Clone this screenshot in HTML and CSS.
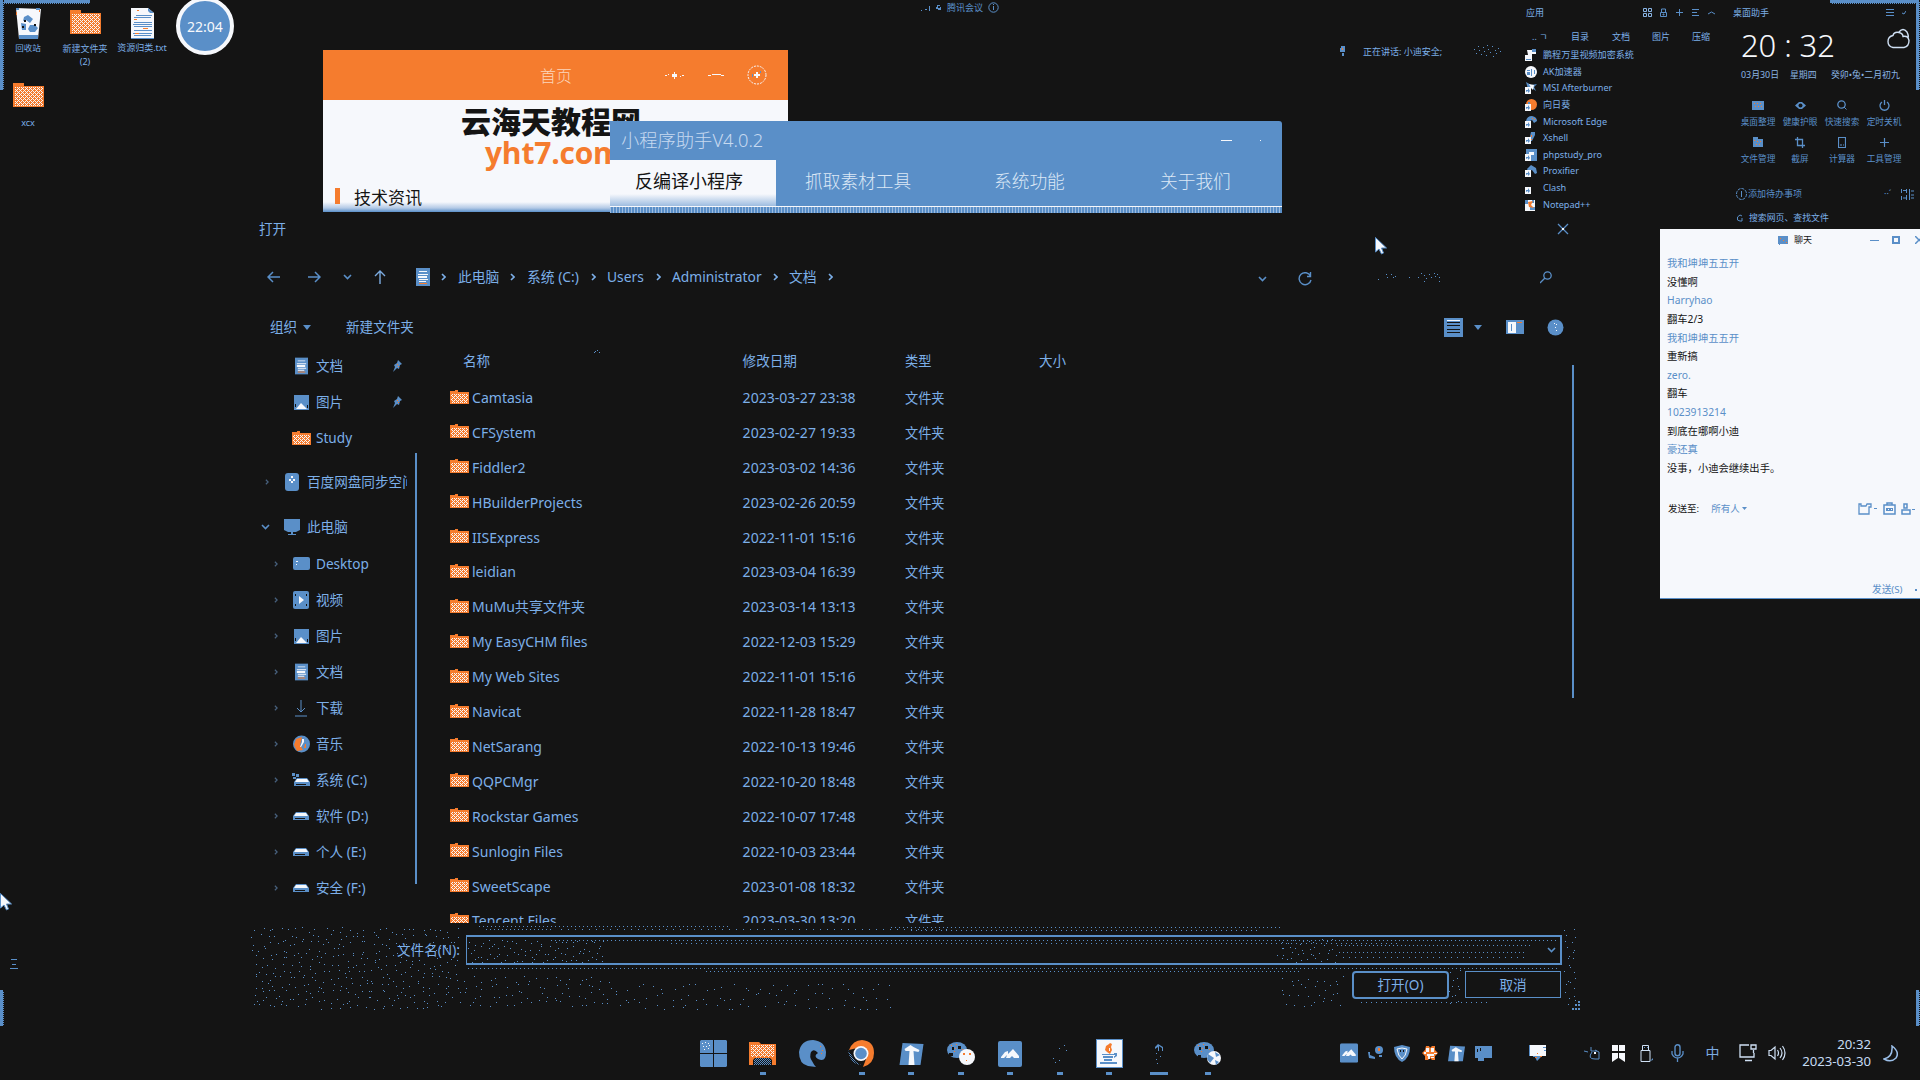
FILE: index.html
```html
<!DOCTYPE html>
<html lang="zh-CN">
<head>
<meta charset="utf-8">
<title>桌面</title>
<link rel="stylesheet" href="styles.css">
</head>
<body>
<svg class="defs" width="0" height="0">
  <defs>
    <pattern id="checker" width="2" height="2" patternUnits="userSpaceOnUse"><rect width="2" height="2" fill="#f57c2e"/><rect width="1" height="1" fill="#f6f8fc"/><rect x="1" y="1" width="1" height="1" fill="#f6f8fc"/></pattern>
    <pattern id="checker2" width="4" height="4" patternUnits="userSpaceOnUse"><rect width="4" height="4" fill="#f57c2e"/><path d="M0 0h1v1H0zM2 0h1v1H2zM1 1h1v1H1zM0 2h1v1H0zM2 2h1v1H2zM3 3h1v1H3z" fill="#f6f8fc"/></pattern>
    <pattern id="mesh" width="2" height="2" patternUnits="userSpaceOnUse"><rect width="1" height="1" fill="#5a8fc8"/><rect x="1" y="1" width="1" height="1" fill="#5a8fc8"/></pattern>
  </defs>
  <symbol id="folder" viewBox="0 0 19 15"><path d="M0 1h5V0h3v2h11v12H0z" fill="#f57c2e"/><path d="M1 4h17v9H1z" fill="url(#checker2)"/></symbol>
  <symbol id="bigfolder" viewBox="0 0 31 25"><path d="M0 0h11v3h20v21H0z" fill="#f57c2e"/><path d="M2 4h28v19H2z" fill="url(#checker2)"/></symbol>
  <symbol id="doc" viewBox="0 0 14 18"><path d="M0 0h14v18H0z" fill="#5a8fc8"/><path d="M3 3h8v1H3zM2 6h10v1H2zM2 8h9v2H2zM3 11h9v1H3zM3 13h7v1H3z" fill="#f6f8fc"/><path d="M3 15h8v1H3z" fill="#f57c2e"/></symbol>
  <symbol id="pic" viewBox="0 0 15 15"><path d="M0 0h15v15H0z" fill="#5a8fc8"/><path d="M2 14l5-6 2 2 4 4z" fill="#f6f8fc"/><path d="M1 9h1v3H1zM13 10h1v3h-1z" fill="#141414"/></symbol>
  <symbol id="drive" viewBox="0 0 16 9"><path d="M3 0h10l3 4v4H0V4z" fill="#5a8fc8"/><path d="M3 1h10l2 3H1z" fill="#f6f8fc"/><path d="M2 6h10v1H2z" fill="#141414"/></symbol>
  <symbol id="chev" viewBox="0 0 5 8"><path d="M1 1l3 3-3 3" fill="none" stroke="currentColor" stroke-width="1.600"/></symbol>
  <symbol id="down" viewBox="0 0 9 6"><path d="M1 1l3.500 3.500L8 1" fill="none" stroke="#5a8fc8" stroke-width="1.600"/></symbol>
  <symbol id="tri" viewBox="0 0 8 5"><path d="M0 0h8L4 5z" fill="#5a8fc8"/></symbol>
  <symbol id="pin" viewBox="0 0 10 12"><path d="M6 0l4 4-2 1-1 4-2-1-4 4 2-5-1-2 3-2z" fill="#5a8fc8"/><path d="M5 4h1v1H5zM6 6h1v1H6z" fill="#f57c2e"/></symbol>
  <symbol id="lnk" viewBox="0 0 12 12"><path d="M0 5h6v7H0z" fill="#f6f8fc"/><path d="M1 10V8h2V6l2 3-2 2V9z" fill="#5a8fc8"/></symbol>
  <symbol id="tee" viewBox="0 0 24 24"><path d="M3 1l21 1-3 21H0z" fill="#5a8fc8"/><path d="M5 7l6-4 3 2 6 3-1 2-5-1 1 14H9l1-14H6z" fill="#f6f8fc"/></symbol>
  <symbol id="wave" viewBox="0 0 24 26"><rect width="24" height="26" rx="2" fill="#5a8fc8"/><path d="M3 16l4-5 3-1v3l5-5 6 7v2h-5l-2-2-2 2H8l1-3-3 3H3z" fill="#f6f8fc"/></symbol>
  <symbol id="wechat" viewBox="0 0 28 26"><ellipse cx="10" cy="9" rx="10" ry="8" fill="#5a8fc8"/><path d="M5 6h2v3H5zM11 5h3v3h-3zM2 12h4v3H2z" fill="#141414"/><path d="M7 10h1v1H7zM9 3h1v1H9zM15 8h1v1h-1zM4 4h1v1H4zM8 7h1v1H8z" fill="#f57c2e"/><circle cx="20" cy="16" r="8" fill="#f6f8fc"/><path d="M16 12h2v2h-2zM22 12h2v2h-2zM19 19h1v1h-1z" fill="#f57c2e"/></symbol>
  <symbol id="wechat2" viewBox="0 0 28 26"><ellipse cx="10" cy="9" rx="10" ry="8" fill="#5a8fc8"/><path d="M5 6h2v3H5zM11 5h3v3h-3zM4 14h3v3H4z" fill="#141414"/><path d="M7 10h1v1H7zM9 3h1v1H9zM15 8h1v1h-1zM4 4h1v1H4zM8 7h1v1H8z" fill="#f57c2e"/><circle cx="20" cy="17" r="7" fill="#f6f8fc"/><path d="M14 13l6 4-4 5-3-4zM21 11l5 3-4 2zM21 19l4 2-3 3z" fill="#5a8fc8"/></symbol>
  <symbol id="cursor" viewBox="0 0 13 18"><path d="M.5.500V15l3.500-3 2.500 5 2-1-2-5h5z" fill="#f6f8fc" stroke="#5a8fc8"/></symbol>
</svg>

<main class="desktop">
  <div class="edge tl-h"></div><div class="edge tl-v"></div><div class="edge tr-h"></div><div class="edge tr-v"></div><div class="edge bl"></div><div class="edge br"></div>

  <figure class="shortcut recycle"><svg width="27" height="32" viewBox="0 0 27 32"><path d="M1 1l25 1-3 30H4z" fill="#f6f8fc"/><path d="M4 28h19v4H4zM1 1h3v2H1zM21 1h4v2h-4z" fill="#5a8fc8"/><path d="M9 10l4-2 5 4-3 4-4-3-3 1zM6 16l5 1v6H7zM15 18h5l3 3-3 4h-5l-2-3z" fill="#5a8fc8"/><path d="M9 13h2v2H9zM19 17h2v2h-2zM7 19h2v2H7z" fill="#141414"/><path d="M1 5h1v3H1zM24 3h1v2h-1z" fill="#f57c2e"/></svg><figcaption>回收站</figcaption></figure>
  <figure class="shortcut newfolder"><svg width="31" height="25"><use href="#bigfolder"/></svg><figcaption>新建文件夹<br>(2)</figcaption></figure>
  <figure class="shortcut txt"><svg width="23" height="31" viewBox="0 0 23 31"><path d="M0 0h17l6 5v26H0z" fill="#f6f8fc"/><path d="M17 0l6 5h-4l-2-2zM0 30h23v1H0zM5 7h16v1H5zM3 9h17v1H3zM3 14h18v1H3zM2 16h19v1H2zM3 18h18v1H3zM3 22h18v1H3zM2 25h19v1H2zM3 27h17v1H3z" fill="#5a8fc8"/><path d="M6 2h2v1H6zM3 11h3v1H3zM12 20h5v1h-5zM4 25h4v1H4z" fill="#f57c2e"/></svg><figcaption>资源归类.txt</figcaption></figure>
  <figure class="shortcut xcx"><svg width="31" height="25"><use href="#bigfolder"/></svg><figcaption>xcx</figcaption></figure>
  <div class="clockball">22:04</div>

  <div class="meeting"><svg width="10" height="9" viewBox="0 0 10 9"><path d="M0 7h1v1H0zM4 6h2v1H4zM8 3h1v5H8z" fill="#5a8fc8"/></svg><svg width="6" height="5" viewBox="0 0 6 5"><path d="M0 2h1V0h3v1H2v2h2V2h1v3H2V4H0z" fill="#5a8fc8"/></svg><span>腾讯会议</span><svg width="11" height="11" viewBox="0 0 11 11"><circle cx="5.500" cy="5.500" r="4.700" fill="none" stroke="#5a8fc8"/><path d="M5 2h1v1H5zM5 4h1v4H5z" fill="#5a8fc8"/></svg></div>
  <div class="speaking"><svg width="5" height="11" viewBox="0 0 5 11"><path d="M1 0h4v6H0V2h1zM2 7h2v3H2z" fill="#5a8fc8"/><path d="M2 2h1v2H2z" fill="#f57c2e"/></svg><span>正在讲话: 小迪安全;</span><svg width="29" height="13" viewBox="0 0 29 13"><path d="M1 4h1v1H1zM3 8h1v1H3zM5 1h1v1H5zM6 5h1v1H6zM8 9h1v1H8zM10 2h1v1h-1zM11 6h1v1h-1zM13 10h1v1h-1zM14 0h1v1h-1zM15 4h1v1h-1zM17 7h1v1h-1zM19 1h1v1h-1zM20 11h1v1h-1zM22 5h1v1h-1zM23 8h1v1h-1zM25 3h1v1h-1zM27 6h1v1h-1z" fill="#5a8fc8"/></svg></div>

  <section class="win site">
    <header><span>首页</span><svg width="20" height="8" viewBox="0 0 20 8"><path d="M0 4h2v1H0zM3 3h1v1H3zM7 3h5v3H7zM9 1h1v7H9zM15 5h1v1h-1zM17 4h2v1h-2z" fill="#f6f8fc"/></svg><svg width="16" height="4" viewBox="0 0 16 4"><path d="M0 2h3v1H0zM4 1h9v1H4zM13 2h3v1h-3z" fill="#f6f8fc"/></svg><svg width="20" height="20" viewBox="0 0 20 20"><circle cx="10" cy="10" r="9" fill="none" stroke="#f6f8fc" stroke-dasharray="2 1"/><path d="M7 9h6v2H7zM9 7h2v6H9z" fill="#f6f8fc"/><path d="M5 9h1v3H5zM13 6h1v2h-1z" fill="#5a8fc8"/></svg></header>
    <h1>云海天教程网</h1>
    <p class="domain">yht7.com</p>
    <p class="news"><i></i>技术资讯</p>
  </section>

  <section class="win helper">
    <header><span>小程序助手V4.0.2</span><i></i><b></b></header>
    <nav><span class="on">反编译小程序</span><span>抓取素材工具</span><span>系统功能</span><span>关于我们</span></nav>
    <div class="strip"></div>
  </section>

  <section class="apps">
    <header><span>应用</span><svg width="9" height="9" viewBox="0 0 9 9"><path d="M.5.500h3v3h-3zM5.500.500h3v3h-3zM.5 5.500h3v3h-3zM5.500 5.500h3v3h-3z" fill="none" stroke="#8ab4e4"/></svg><svg width="7" height="9" viewBox="0 0 7 9"><path d="M1.500 4V1h4v3M.5 4.500h6v4h-6zM3 6h1v1H3z" fill="none" stroke="#5a8fc8"/></svg><svg width="7" height="9" viewBox="0 0 7 9"><path d="M0 4h7v1H0zM3 1h1v7H3z" fill="#5a8fc8"/></svg><svg width="7" height="9" viewBox="0 0 7 9"><path d="M0 1h7v1H0zM0 4h5v1H0zM0 7h7v1H0z" fill="#5a8fc8"/></svg><svg width="7" height="9" viewBox="0 0 7 9"><path d="M0 6l3.500-2L7 6" fill="none" stroke="#5a8fc8"/></svg></header>
    <nav><span>‥ ㄱ</span><span>目录</span><span>文档</span><span>图片</span><span>压缩</span></nav>
    <ul>
      <li><svg width="12" height="13" viewBox="0 0 12 13"><path d="M2 1h5l4 1v3H7v7H0V6h3z" fill="#f6f8fc"/><path d="M7 0h4v3H7zM1 10h5v1H1z" fill="#5a8fc8"/></svg>鹏程万里视频加密系统</li>
      <li><svg width="12" height="12" viewBox="0 0 12 12"><circle cx="6" cy="6" r="6" fill="#f6f8fc"/><path d="M2 4h3v1H2zM6 3h1v7H6zM2 6h3v3H2zM9 4h1v4H9z" fill="#5a8fc8"/></svg>AK加速器</li>
      <li><svg width="12" height="12" viewBox="0 0 12 12"><path d="M1 0l5 3 6-1-3 3 2 4-4-3-4 1z" fill="#5a8fc8"/><path d="M4 2l5 1-1 5-2-2z" fill="#f6f8fc"/><use href="#lnk"/></svg>MSI Afterburner</li>
      <li><svg width="12" height="12" viewBox="0 0 12 12"><circle cx="6.500" cy="5.500" r="5.500" fill="#f57c2e"/><path d="M3 3h2v2H3z" fill="#5a8fc8"/><use href="#lnk"/></svg>向日葵</li>
      <li><svg width="12" height="12" viewBox="0 0 12 12"><path d="M1 5q1-5 6-5 5 1 5 5l-3 2-2-3-4 2z" fill="#5a8fc8"/><path d="M7 2h1v1H7zM9 3h1v1H9z" fill="#f57c2e"/><use href="#lnk"/></svg>Microsoft Edge</li>
      <li><svg width="12" height="12" viewBox="0 0 12 12"><path d="M6 0h4v3l-3 6H4z" fill="#5a8fc8"/><path d="M6 3h1v2H6zM5 7h2v1H5z" fill="#f57c2e"/><use href="#lnk"/></svg>Xshell</li>
      <li><svg width="12" height="12" viewBox="0 0 12 12"><path d="M1 0h11v12H1z" fill="#5a8fc8"/><path d="M4 3h5v3H6V5H4z" fill="#f6f8fc"/><use href="#lnk"/></svg>phpstudy_pro</li>
      <li><svg width="12" height="12" viewBox="0 0 12 12"><path d="M2 4l4-4 5 3 1 5-2 1-3-4-4 1z" fill="#5a8fc8"/><use href="#lnk"/></svg>Proxifier</li>
      <li><svg width="12" height="12"><use href="#lnk"/></svg>Clash</li>
      <li><svg width="12" height="12" viewBox="0 0 12 12"><path d="M2 1h8v11H0V2z" fill="#f6f8fc"/><path d="M0 1h3v4H0zM7 1h2v3H7zM5 8h5v3H5z" fill="#5a8fc8"/><path d="M3 3l5-1-2 4 3 3-5-1z" fill="#f57c2e"/></svg>Notepad++</li>
    </ul>
  </section>

  <section class="assist">
    <header><span>桌面助手</span><svg width="8" height="9" viewBox="0 0 8 9"><path d="M0 1h8v1H0zM0 4h8v1H0zM0 7h8v1H0z" fill="#5a8fc8"/></svg><svg width="4" height="5" viewBox="0 0 4 5"><path d="M0 3l2 1 2-3" fill="none" stroke="#5a8fc8"/></svg></header>
    <div class="time"><strong>20 : 32</strong><svg width="24" height="21" viewBox="0 0 24 21"><path d="M6 19.500q-5-1-5-6 0-5 5-6 1-4 6-3 4 1 4 4 5-1 6 4 0 6-5 7zM12 4q4-5 8 0 2 4 1 6" fill="none" stroke="#cfe0f4" stroke-width="1.400"/></svg></div>
    <div class="date"><span>03月30日</span><span>星期四</span><span>癸卯•兔•二月初九</span></div>
    <div class="tools">
      <span><svg width="12" height="9" viewBox="0 0 12 9"><path d="M0 0h12v9H0z" fill="#5a8fc8"/><path d="M2 2h1v1H2zM5 2h1v1H5zM8 2h1v1H8zM3 5h1v1H3zM6 5h1v1H6zM9 5h1v1H9z" fill="#f57c2e"/></svg>桌面整理</span>
      <span><svg width="11" height="9" viewBox="0 0 11 9"><path d="M0 4.500L4 1h3l4 3.500L7 8H4z" fill="#5a8fc8"/><circle cx="5.500" cy="4.500" r="2" fill="#141414"/></svg>健康护眼</span>
      <span><svg width="10" height="10" viewBox="0 0 10 10"><circle cx="4.500" cy="4.500" r="3.700" fill="none" stroke="#5a8fc8" stroke-width="1.300"/><path d="M7 7l2.500 2.500" stroke="#5a8fc8"/></svg>快速搜索</span>
      <span><svg width="11" height="11" viewBox="0 0 11 11"><path d="M3 2a4.500 4.500 0 105 0M5.500 0v5" fill="none" stroke="#5a8fc8" stroke-width="1.300"/></svg>定时关机</span>
      <span><svg width="10" height="10" viewBox="0 0 10 10"><path d="M0 0h5v2h5v8H0z" fill="#5a8fc8"/><path d="M1 3h1v1H1zM4 4h1v1H4zM7 4h1v1H7zM3 7h1v1H3zM6 7h1v1H6z" fill="#f57c2e"/></svg>文件管理</span>
      <span><svg width="10" height="11" viewBox="0 0 10 11"><path d="M2.500 0v8.500H10M0 2.500h7.500V11" fill="none" stroke="#5a8fc8" stroke-width="1.300"/></svg>截屏</span>
      <span><svg width="8" height="11" viewBox="0 0 8 11"><path d="M.5.500h7v10h-7zM2 8h2M5 8h1" fill="none" stroke="#5a8fc8" stroke-width="1.200"/></svg>计算器</span>
      <span><svg width="9" height="9" viewBox="0 0 9 9"><path d="M0 4.500h9M4.500 0v9" stroke="#5a8fc8" stroke-width="1.200"/></svg>工具管理</span>
    </div>
    <div class="todo"><svg width="11" height="12" viewBox="0 0 11 12"><ellipse cx="5.500" cy="6" rx="5" ry="5.500" fill="none" stroke="#5a8fc8" stroke-dasharray="3 1"/><path d="M5 3h1v6H5z" fill="#5a8fc8"/></svg><span>添加待办事项</span><i>··ˊ</i><svg width="13" height="11" viewBox="0 0 13 11"><path d="M.5 0v4M2 1.500h3M.5 7v4M2 9h3M5.500 0v4M5.500 6v5M8.500 0v11M10 2h3M10 6h3M10 9h3" stroke="#5a8fc8"/></svg></div>
    <div class="find"><svg width="6" height="8" viewBox="0 0 6 8"><path d="M5 2L3 1 .5 3v3L3 7h2V4" fill="none" stroke="#5a8fc8"/></svg><span>搜索网页、查找文件</span></div>
  </section>

  <section class="win chat">
    <header><svg width="10" height="9" viewBox="0 0 10 9"><path d="M0 0h10v8H2v1H1V8H0z" fill="#5a8fc8"/><path d="M2 2h1v1H2zM5 4h1v1H5zM8 6h1v1H8z" fill="#f57c2e"/></svg><span>聊天</span><svg width="9" height="3" viewBox="0 0 9 3"><path d="M0 1h9v1H0z" fill="#5a8fc8"/></svg><svg width="8" height="8" viewBox="0 0 8 8"><path d="M1 1h6v6H1z" fill="none" stroke="#5a8fc8" stroke-width="2"/></svg><svg width="5" height="8" viewBox="0 0 5 8"><path d="M0 0l5 5M0 8l5-5" stroke="#5a8fc8" stroke-width="1.500"/></svg></header>
    <dl><dt>我和坤坤五五开</dt><dd>没懂啊</dd><dt>Harryhao</dt><dd>翻车2/3</dd><dt>我和坤坤五五开</dt><dd>重新搞</dd><dt>zero.</dt><dd>翻车</dd><dt>1023913214</dt><dd>到底在哪啊小迪</dd><dt>豪还真</dt><dd>没事，小迪会继续出手。</dd></dl>
    <div class="sendto"><b>发送至:</b><span>所有人</span><svg width="5" height="4" viewBox="0 0 5 4"><path d="M0 0h5L2.500 3z" fill="#5a8fc8"/></svg><svg class="push" width="20" height="12" viewBox="0 0 20 12"><path d="M3 3v-2H1v10h10V4h2V1H9L8 3z" fill="none" stroke="#5a8fc8" stroke-width="1.300"/><path d="M16 5h3v1h-3z" fill="#5a8fc8"/></svg><svg width="13" height="13" viewBox="0 0 13 13"><path d="M1 3h11v9H1zM4 3V1h5v2" fill="none" stroke="#5a8fc8" stroke-width="1.500"/><path d="M3 6h7v3H3z" fill="#5a8fc8"/><path d="M5 7h1v1H5zM8 7h1v1H8z" fill="#f6f8fc"/></svg><svg width="14" height="12" viewBox="0 0 14 12"><path d="M3 1h3v4H3zM1 7h8v4H1z" fill="none" stroke="#5a8fc8" stroke-width="1.500"/><path d="M11 6h3v1h-3z" fill="#5a8fc8"/></svg></div>
    <footer>发送(S)<i></i></footer>
  </section>

  <section class="win dialog">
    <header><span>打开</span><svg width="12" height="12" viewBox="0 0 12 12"><path d="M1 1l10 10M11 1L1 11" stroke="#5a8fc8" stroke-width="1.300"/><path d="M5 5h2v2H5z" fill="#f6f8fc"/></svg></header>
    <nav class="path">
      <svg width="14" height="12" viewBox="0 0 14 12"><path d="M13 6H1M6 1L1 6l5 5" fill="none" stroke="#5a8fc8" stroke-width="1.500"/></svg>
      <svg width="14" height="12" viewBox="0 0 14 12"><path d="M1 6h12M8 1l5 5-5 5" fill="none" stroke="#5a8fc8" stroke-width="1.500"/></svg>
      <svg width="9" height="6"><use href="#down"/></svg>
      <svg width="12" height="14" viewBox="0 0 12 14"><path d="M6 14V1M1 6l5-5 5 5" fill="none" stroke="#7cabe0" stroke-width="1.400"/></svg>
      <svg width="14" height="18"><use href="#doc"/></svg>
      <svg width="5" height="8"><use href="#chev"/></svg><span>此电脑</span>
      <svg width="5" height="8"><use href="#chev"/></svg><span>系统 (C:)</span>
      <svg width="5" height="8"><use href="#chev"/></svg><span>Users</span>
      <svg width="5" height="8"><use href="#chev"/></svg><span>Administrator</span>
      <svg width="5" height="8"><use href="#chev"/></svg><span>文档</span>
      <svg width="5" height="8"><use href="#chev"/></svg>
      <svg class="low" width="9" height="6"><use href="#down"/></svg>
      <svg class="low" width="14" height="14" viewBox="0 0 14 14"><path d="M12.500 4A6 6 0 1013 8M12.500 0v4.500H9" fill="none" stroke="#5a8fc8" stroke-width="1.400"/></svg>
      <svg width="64" height="10" viewBox="0 0 64 10"><path d="M1 7h1v1H1zM9 2h1v1H9zM10 5h1v1h-1zM14 2h1v1h-1zM16 5h1v1h-1zM18 4h1v1h-1zM32 5h1v1h-1zM41 5h1v1h-1zM44 1h1v1h-1zM47 3h1v1h-1zM49 6h1v1h-1zM47 9h1v1h-1zM52 2h1v1h-1zM54 5h1v1h-1zM57 1h1v1h-1zM58 4h1v1h-1zM60 2h1v1h-1zM62 5h1v1h-1zM62 9h1v1h-1z" fill="#5a8fc8"/></svg>
      <svg width="12" height="13" viewBox="0 0 12 13"><circle cx="7.500" cy="4.500" r="3.700" fill="none" stroke="#5a8fc8" stroke-width="1.300"/><path d="M5 7l-5 5" stroke="#5a8fc8" stroke-width="1.300"/></svg>
    </nav>
    <div class="toolbar">
      <span>组织</span><svg width="8" height="5"><use href="#tri"/></svg><span>新建文件夹</span>
      <svg width="19" height="19" viewBox="0 0 19 19"><path d="M0 0h19v19H0z" fill="#5a8fc8"/><path d="M3 4h13v1H3zM3 7h13v1H3zM3 11h13v1H3zM3 14h13v1H3z" fill="#141414"/><path d="M3 2h13v1H3z" fill="#f6f8fc"/></svg>
      <svg width="8" height="5"><use href="#tri"/></svg>
      <svg width="18" height="14" viewBox="0 0 18 14"><path d="M0 0h18v14H0z" fill="#5a8fc8"/><path d="M2 2h8v11H2z" fill="#f6f8fc"/><path d="M5 4h1v7H5z" fill="#5a8fc8"/><path d="M11 2h5v1h-5z" fill="#f57c2e"/></svg>
      <svg width="17" height="17" viewBox="0 0 17 17"><circle cx="8.500" cy="8.500" r="8" fill="#5a8fc8"/><path d="M7 4h1v1H7zM9 5h1v1H9zM8 8h1v1H8zM9 11h1v1H9z" fill="#f6f8fc"/></svg>
    </div>
    <div class="body">
      <ul class="tree">
        <li class="sub"><em></em><svg width="13" height="18"><use href="#doc"/></svg><span>文档</span><svg class="pin" width="10" height="12"><use href="#pin"/></svg></li>
        <li class="sub"><em></em><svg width="15" height="15"><use href="#pic"/></svg><span>图片</span><svg class="pin" width="10" height="12"><use href="#pin"/></svg></li>
        <li class="sub"><em></em><svg width="19" height="15"><use href="#folder"/></svg><span>Study</span></li>
        <li class="top cloud"><svg class="dim" width="4" height="6"><use href="#chev"/></svg><svg width="14" height="18" viewBox="0 0 14 18"><rect width="14" height="18" rx="3" fill="#5a8fc8"/><path d="M6 3h2v2H6zM4 6h2v2H4zM8 6h2v2H8zM6 8h2v2H6z" fill="#f6f8fc"/></svg><span>百度网盘同步空间</span></li>
        <li class="top pc"><svg width="9" height="6"><use href="#down"/></svg><svg width="16" height="17" viewBox="0 0 16 17"><path d="M0 0h16v11l-4 2H4l-4-2zM7 13h2v2h3v1H4v-1h3z" fill="#5a8fc8"/></svg><span>此电脑</span></li>
        <li class="sub"><svg class="dim" width="4" height="6"><use href="#chev"/></svg><svg width="17" height="14" viewBox="0 0 17 14"><rect width="17" height="13" rx="2" fill="#5a8fc8"/><path d="M3 4h2v1H3zM3 7h1v1H3z" fill="#f6f8fc"/></svg><span>Desktop</span></li>
        <li class="sub"><svg class="dim" width="4" height="6"><use href="#chev"/></svg><svg width="16" height="18" viewBox="0 0 16 18"><rect width="16" height="18" rx="2" fill="#5a8fc8"/><path d="M6 5l5 4-5 4z" fill="#f6f8fc"/><path d="M2 3h1v2H2zM13 3h1v2h-1zM2 13h1v2H2zM13 13h1v2h-1z" fill="#141414"/></svg><span>视频</span></li>
        <li class="sub"><svg class="dim" width="4" height="6"><use href="#chev"/></svg><svg width="15" height="15"><use href="#pic"/></svg><span>图片</span></li>
        <li class="sub"><svg class="dim" width="4" height="6"><use href="#chev"/></svg><svg width="13" height="18"><use href="#doc"/></svg><span>文档</span></li>
        <li class="sub"><svg class="dim" width="4" height="6"><use href="#chev"/></svg><svg width="12" height="17" viewBox="0 0 12 17"><path d="M6 0v12M2 8l4 4 4-4M0 16h12" fill="none" stroke="#5a8fc8"/></svg><span>下载</span></li>
        <li class="sub"><svg class="dim" width="4" height="6"><use href="#chev"/></svg><svg width="17" height="18" viewBox="0 0 17 18"><circle cx="8.500" cy="9" r="8.500" fill="#5a8fc8"/><path d="M3 4l6-2-2 8 3 5-6 1-3-6z" fill="#f57c2e"/><path d="M9 4h2v3L8 12H7l2-5z" fill="#f6f8fc"/><path d="M12 9h1v4h-2z" fill="#f57c2e"/></svg><span>音乐</span></li>
        <li class="sub"><svg class="dim" width="4" height="6"><use href="#chev"/></svg><svg width="18" height="15" viewBox="0 0 18 15"><path d="M0 0h3v3H0zM4 1h3v3H4zM1 4h3v2H1z" fill="#5a8fc8"/><svg x="2" y="5" width="16" height="9"><use href="#drive"/></svg></svg><span>系统 (C:)</span></li>
        <li class="sub"><svg class="dim" width="4" height="6"><use href="#chev"/></svg><svg width="16" height="9"><use href="#drive"/></svg><span>软件 (D:)</span></li>
        <li class="sub"><svg class="dim" width="4" height="6"><use href="#chev"/></svg><svg width="16" height="9"><use href="#drive"/></svg><span>个人 (E:)</span></li>
        <li class="sub"><svg class="dim" width="4" height="6"><use href="#chev"/></svg><svg width="16" height="9"><use href="#drive"/></svg><span>安全 (F:)</span></li>
      </ul>
      <div class="bar left"></div>
      <div class="files">
        <div class="row head"><span></span><span class="nm">名称<svg class="sort" width="7" height="3" viewBox="0 0 7 3"><path d="M0 2h1v1H0zM1 1h1v1H1zM3 0h1v1H3zM5 2h1v1H5z" fill="#5a8fc8"/></svg></span><span>修改日期</span><span>类型</span><span>大小</span></div>
        <div class="row"><svg width="19" height="15"><use href="#folder"/></svg><span>Camtasia</span><span>2023-03-27 23:38</span><span>文件夹</span></div>
        <div class="row"><svg width="19" height="15"><use href="#folder"/></svg><span>CFSystem</span><span>2023-02-27 19:33</span><span>文件夹</span></div>
        <div class="row"><svg width="19" height="15"><use href="#folder"/></svg><span>Fiddler2</span><span>2023-03-02 14:36</span><span>文件夹</span></div>
        <div class="row"><svg width="19" height="15"><use href="#folder"/></svg><span>HBuilderProjects</span><span>2023-02-26 20:59</span><span>文件夹</span></div>
        <div class="row"><svg width="19" height="15"><use href="#folder"/></svg><span>IISExpress</span><span>2022-11-01 15:16</span><span>文件夹</span></div>
        <div class="row"><svg width="19" height="15"><use href="#folder"/></svg><span>leidian</span><span>2023-03-04 16:39</span><span>文件夹</span></div>
        <div class="row"><svg width="19" height="15"><use href="#folder"/></svg><span>MuMu共享文件夹</span><span>2023-03-14 13:13</span><span>文件夹</span></div>
        <div class="row"><svg width="19" height="15"><use href="#folder"/></svg><span>My EasyCHM files</span><span>2022-12-03 15:29</span><span>文件夹</span></div>
        <div class="row"><svg width="19" height="15"><use href="#folder"/></svg><span>My Web Sites</span><span>2022-11-01 15:16</span><span>文件夹</span></div>
        <div class="row"><svg width="19" height="15"><use href="#folder"/></svg><span>Navicat</span><span>2022-11-28 18:47</span><span>文件夹</span></div>
        <div class="row"><svg width="19" height="15"><use href="#folder"/></svg><span>NetSarang</span><span>2022-10-13 19:46</span><span>文件夹</span></div>
        <div class="row"><svg width="19" height="15"><use href="#folder"/></svg><span>QQPCMgr</span><span>2022-10-20 18:48</span><span>文件夹</span></div>
        <div class="row"><svg width="19" height="15"><use href="#folder"/></svg><span>Rockstar Games</span><span>2022-10-07 17:48</span><span>文件夹</span></div>
        <div class="row"><svg width="19" height="15"><use href="#folder"/></svg><span>Sunlogin Files</span><span>2022-10-03 23:44</span><span>文件夹</span></div>
        <div class="row"><svg width="19" height="15"><use href="#folder"/></svg><span>SweetScape</span><span>2023-01-08 18:32</span><span>文件夹</span></div>
        <div class="row"><svg width="19" height="15"><use href="#folder"/></svg><span>Tencent Files</span><span>2023-03-30 13:20</span><span>文件夹</span></div>
      </div>
      <div class="bar right"></div>
    </div>
    <footer>
      <svg class="grain" width="1329" height="84" viewBox="0 0 1329 84"><path id="grain" fill="#5a8fc8"/></svg>
      <div class="namerow"><label>文件名(N):</label><div class="field"><svg width="9" height="6"><use href="#down"/></svg></div></div>
      <div class="btns"><button class="primary">打开(O)</button><button>取消</button></div>
      <svg class="grip" width="8" height="9" viewBox="0 0 8 9"><path d="M6 0h2v2H6zM3 3h2v2H3zM6 3h2v2H6zM0 7h2v2H0zM3 7h2v2H3zM6 7h2v2H6z" fill="#5a8fc8"/></svg>
    </footer>
  </section>

  <svg class="ptr a" width="13" height="18"><use href="#cursor"/></svg>
  <svg class="ptr b" width="13" height="18"><use href="#cursor"/></svg>
  <svg class="mark" width="8" height="10" viewBox="0 0 8 10"><path d="M1 0h6v1H1zM2 5h4v1H2zM0 9h8v1H0z" fill="#5a8fc8"/></svg>

  <footer class="taskbar">
    <div class="pinned">
      <span><svg width="27" height="27" viewBox="0 0 27 27"><path d="M1 0h12v13H0V1zM14 0h12l1 1v12H14zM0 14h13v13H1l-1-1zM14 14h13v12l-1 1H14z" fill="#5a8fc8"/><path d="M2 3h1v1H2zM5 2h1v1H5zM8 3h1v1H8zM3 6h1v1H3zM6 6h1v1H6zM9 5h1v1H9zM4 9h1v1H4zM8 8h1v1H8z" fill="#f6f8fc"/></svg></span>
      <span class="run"><svg width="27" height="25" viewBox="0 0 27 25"><path d="M0 1h10l2 2h15v21h-4v-5l-2-2H6l-2 2v5H0z" fill="#f57c2e"/><path d="M2 4h23v12H2z" fill="url(#checker2)"/><path d="M7 17h13l2 2v5H5v-5z" fill="url(#mesh)"/></svg></span>
      <span><svg width="27" height="27" viewBox="0 0 27 27"><path d="M9 26Q0 24 0 12 2 0 14 0q12 1 13 12 0 11-8 7-5-3 0-6-4-5-7-1-2 5 1 9 2 4 4 6z" fill="#5a8fc8"/><path d="M21 6h1v1h-1zM23 10h1v1h-1zM22 13h1v1h-1z" fill="#f57c2e"/></svg></span>
      <span class="run"><svg width="27" height="27" viewBox="0 0 27 27"><path d="M1 10Q5 0 14 0q12 1 12 13 0 11-11 14l3-8-9-11z" fill="#f57c2e"/><path d="M0 10l8 12 5 3Q2 24 0 10z" fill="url(#mesh)"/><circle cx="13" cy="13.500" r="7.500" fill="#f6f8fc"/><circle cx="13" cy="13.500" r="5.800" fill="#5a8fc8"/></svg></span>
      <span class="run"><svg width="25" height="24"><use href="#tee"/></svg></span>
      <span class="run"><svg width="28" height="26"><use href="#wechat"/></svg></span>
      <span class="run"><svg width="24" height="26"><use href="#wave"/></svg></span>
      <span class="run"><svg width="18" height="18" viewBox="0 0 18 18"><path d="M13 0h1v1h-1zM8 3h1v1H8zM15 5h1v1h-1zM2 13h1v1H2zM8 15h1v1H8zM4 17h1v1H4z" fill="#5a8fc8"/></svg></span>
      <span class="run"><svg width="27" height="29" viewBox="0 0 27 29"><rect x=".5" y=".5" width="26" height="28" fill="#f6f8fc" stroke="#5a8fc8"/><path d="M14 4l2 1-1 3 1 3-2 4-3-2-2-2 1-4 3-2z" fill="#f57c2e"/><path d="M13 9h1v3h-1z" fill="#f6f8fc"/><path d="M6 15h12v1H6zM7 17h10v2H7zM8 20h8v2H8zM4 23h17v2H4zM18 14h3v3l-3 2v-2h1v-1h-1z" fill="#5a8fc8"/></svg></span>
      <span class="run wide"><svg width="10" height="20" viewBox="0 0 10 20"><path d="M1 3l3-3 5 3v4H8V4L5 2v5H4V3L1 5zM2 9h1v1H2zM6 12h1v1H6zM2 15h1v1H2zM3 19h1v1H3z" fill="#5a8fc8"/></svg></span>
      <span class="run"><svg width="28" height="26"><use href="#wechat2"/></svg></span>
    </div>
    <div class="tray">
      <svg width="18" height="20" viewBox="0 0 24 26"><use href="#wave"/></svg>
      <svg width="15" height="15" viewBox="0 0 15 15"><circle cx="11" cy="4" r="4" fill="#5a8fc8"/><path d="M0 6h2v3l5 2v2L1 12zM11 9h3v2h-3z" fill="#5a8fc8"/><path d="M10 2h2v3h-2z" fill="#f57c2e"/></svg>
      <svg width="16" height="17" viewBox="0 0 16 17"><path d="M0 2l8-2 8 2q0 11-8 15Q0 13 0 2z" fill="#5a8fc8"/><path d="M3 4l5-1 5 1q-1 7-5 10-4-3-5-10z" fill="none" stroke="#f6f8fc"/><path d="M6 5h1v2H6zM9 5h1v2H9z" fill="#141414"/></svg>
      <svg width="16" height="16" viewBox="0 0 16 16"><path d="M4 1h3l1 2 2-2h3v4l3 3-3 3v4h-3l-2-2-2 2H3v-4L0 8l3-3z" fill="#f57c2e"/><path d="M4 3h3v4H4zM9 3h3v4H9zM5 9h7v2H5zM2 7h2v2H2zM12 8h3v1h-3zM6 11h2v3H6zM9 12h3v1H9z" fill="#f6f8fc"/></svg>
      <svg width="17" height="17"><use href="#tee"/></svg>
      <svg width="17" height="15" viewBox="0 0 17 15"><path d="M0 0h17v12H9v3H3v-3H0z" fill="#5a8fc8"/><path d="M2 3h1v3H2zM5 2h1v3H5z" fill="#141414"/></svg>
      <svg width="17" height="16" viewBox="0 0 17 16"><path d="M0 0h17v11H0z" fill="#f6f8fc"/><path d="M0 0h1v11H0zM14 2h3v1h-3zM15 5h2v1h-2zM4 11h9l-2 2-3 3-2-4H4z" fill="#5a8fc8"/><path d="M6 12h2v1H6zM11 11h2v1h-2zM8 8h1v1H8z" fill="#f57c2e"/></svg>
      <svg width="16" height="14" viewBox="0 0 16 14"><path d="M0 5l4 1M7 1v4h6M8 6q-5 7 3 7h4V6l-4-2" fill="none" stroke="#5a8fc8"/><path d="M10 6h2v2h-2z" fill="#f6f8fc"/></svg>
      <svg width="13" height="17" viewBox="0 0 13 17"><path d="M0 0h6v6H0zM7 0h6v6H7zM0 8h6v5l-6 4zM7 8h6v9l-6-4z" fill="#f6f8fc"/></svg>
      <svg width="13" height="17" viewBox="0 0 13 17"><path d="M2.500 5V.500h6V5M1 5.500h9v11H1z" fill="none" stroke="#cfe0f4"/><path d="M4 2h1v1H4zM7 2h1v1H7zM10 16l3-3v2z" fill="#5a8fc8"/></svg>
      <svg width="13" height="18" viewBox="0 0 13 18"><rect x="4" y=".7" width="5" height="11" rx="2.500" fill="none" stroke="#5a8fc8" stroke-width="1.400"/><path d="M1 7v3q2 4 5.500 4T12 10V7M6.500 14v4" fill="none" stroke="#5a8fc8" stroke-width="1.300"/></svg>
      <b>中</b>
      <svg width="18" height="18" viewBox="0 0 18 18"><path d="M10 1H1v12h14V9M6 16.500h7M14.500 9V6M12 1h5v4h-5z" fill="none" stroke="#cfe0f4" stroke-width="1.300"/></svg>
      <svg width="18" height="16" viewBox="0 0 18 16"><path d="M1 5.500h2L7 2v12l-4-3.500H1zM9.500 5q2 3 0 6M12 3q4 5 0 10M14.500 1q5 7 0 14" fill="none" stroke="#cfe0f4" stroke-width="1.200"/></svg>
      <time>20:32<br>2023-03-30</time>
      <svg width="15" height="17" viewBox="0 0 15 17"><path d="M9 1q8 6 4 12-5 5-12 1 9-2 8-13z" fill="none" stroke="#9cc0ea" stroke-width="1.500"/></svg>
    </div>
  </footer>
</main>
<script src="grain.js"></script>
</body>
</html>
```
FILE: grain.js
```js
// Fills the dialog footer with a sparse grain of single-pixel dots.
(function () {
  var seed = 20231, d = '';
  function rnd() {
    seed = (seed + 0x6D2B79F5) | 0;
    var t = Math.imul(seed ^ (seed >>> 15), 1 | seed);
    t = (t + Math.imul(t ^ (t >>> 7), 61 | t)) ^ t;
    return ((t ^ (t >>> 14)) >>> 0) / 4294967296;
  }
  function dot(x, y) { d += 'M' + Math.floor(x) + ' ' + Math.floor(y) + 'h1v1h-1z'; }
  // One jittered dot per cell keeps the spacing even.
  function scatter(x0, y0, w, h, cell) {
    for (var y = y0; y < y0 + h - 2; y += cell)
      for (var x = x0; x < x0 + w - 2; x += cell) dot(x + rnd() * cell, y + rnd() * cell * 0.9);
  }
  function line(x0, x1, y, step) { for (var x = x0; x < x1; x += step) dot(x, y); }
  scatter(0, 1, 212, 80, 7);
  scatter(212, 50, 150, 28, 8);
  scatter(362, 58, 280, 22, 9);
  scatter(217, 14, 140, 22, 6);
  scatter(1026, 13, 60, 22, 6);
  scatter(1030, 50, 60, 30, 8);
  scatter(1198, 44, 14, 38, 6);
  scatter(1313, 2, 14, 80, 6);
  line(228, 480, 0, 4); line(235, 300, 3, 4); line(310, 700, 3, 7);
  line(640, 1030, 1, 4); line(660, 1010, 4, 5);
  line(300, 1308, 14, 4); line(420, 1150, 17, 5);
  line(1086, 1280, 19, 4); line(1088, 1276, 26, 4); line(1092, 1276, 31, 6);
  line(217, 1308, 42, 4); line(455, 1050, 45, 4);
  line(1110, 1240, 76, 5);
  document.getElementById('grain').setAttribute('d', d);
})();
```
FILE: styles.css
```css
* { box-sizing: border-box; margin: 0; padding: 0; }
:root { --ink: #141414; --blue: #5a8fc8; --soft: #7cafe8; --orange: #f57c2e; --paper: #f6f8fc; }
body { background: var(--ink); color: var(--soft); font-family: "Noto Sans", "Noto Sans CJK SC", sans-serif; font-size: 14px; overflow: hidden; }
svg { display: block; flex: none; }
ul { list-style: none; }
i, em { font-style: normal; }
header, nav, span { white-space: nowrap; }
.defs { position: absolute; }
.desktop { position: relative; width: 1920px; height: 1080px; overflow: hidden; }
.win { position: absolute; }

.edge { position: absolute; background: var(--blue); }
.tl-h, .tr-h { top: 0; width: 90px; height: 4px; border-bottom: 1px dotted var(--ink); }
.tl-v, .tr-v { top: 0; width: 4px; height: 90px; border-right: 1px dotted var(--ink); }
.tl-h, .tl-v, .bl { left: 0; }
.tr-h, .tr-v, .br { right: 0; }
.bl, .br { top: 990px; width: 4px; height: 36px; border-right: 1px dotted var(--ink); }

.shortcut { position: absolute; width: 70px; display: flex; flex-direction: column; align-items: center; font-size: 9px; line-height: 13px; text-align: center; }
.shortcut figcaption { padding-top: 2px; white-space: nowrap; }
.recycle { left: -7px; top: 7px; font-size: 8.500px; }
.newfolder { left: 50px; top: 10px; }
.newfolder figcaption { padding-top: 7px; }
.txt { left: 107px; top: 8px; }
.xcx { left: -7px; top: 83px; }
.xcx figcaption { padding-top: 8px; }
.clockball { position: absolute; left: 176px; top: -3px; width: 58px; height: 58px; border: 4px solid var(--paper); border-radius: 50%; background: var(--blue); color: var(--paper); font-size: 14px; line-height: 51px; text-align: center; }

.meeting { position: absolute; left: 921px; top: 0; height: 15px; display: flex; align-items: center; gap: 5px; font-size: 9px; line-height: 15px; color: var(--blue); }
.speaking { position: absolute; left: 1340px; top: 44px; height: 15px; display: grid; grid-template-columns: 23px 110px 30px; align-items: center; font-size: 9px; line-height: 15px; }

.site { left: 323px; top: 50px; width: 465px; height: 162px; background: linear-gradient(var(--paper) 152px, #b4cae6 158px, var(--blue) 162px); color: var(--ink); }
.site header { height: 50px; background: var(--orange); color: #fbd5bc; display: grid; grid-template-columns: 125px 43px 39px 20px; padding-left: 217px; align-items: center; font-size: 16px; font-weight: 300; }
.site h1 { padding-left: 138px; font-size: 30px; line-height: 43px; height: 35px; font-weight: 800; white-space: nowrap; }
.domain { padding-left: 162px; font-family: "Open Sans", sans-serif; font-size: 30px; font-weight: 700; line-height: 36px; height: 47px; color: var(--orange); letter-spacing: -.2px; }
.news { display: flex; align-items: center; gap: 14px; height: 28px; padding-left: 12px; font-size: 17px; }
.news i { width: 5px; height: 16px; background: var(--orange); }

.helper { left: 610px; top: 121px; width: 672px; height: 92px; background: var(--blue); color: #dce8f6; border-radius: 0 3px 0 0; }
.helper header { height: 39px; display: flex; padding-left: 11px; font-size: 18.300px; font-weight: 300; line-height: 38px; color: #c6d9f0; }
.helper header span { width: 600px; }
.helper header i { width: 11px; height: 1px; margin: 19px 28px 0 0; background: var(--paper); }
.helper header b { width: 1px; height: 1px; margin-top: 19px; background: var(--paper); }
.helper nav { display: grid; grid-template-columns: 166px 191px 166px 149px; height: 46px; font-size: 17.700px; line-height: 42px; font-weight: 300; }
.helper nav span { padding-left: 27px; }
.helper nav span:nth-child(2) { padding-left: 29px; }
.helper nav .on { background: linear-gradient(var(--paper) 34px, #9dbce0 46px); color: var(--ink); font-weight: 400; }
.helper nav .on { padding-left: 25px; font-size: 18px; }
.strip { height: 7px; border-top: 1px solid var(--paper); background: repeating-linear-gradient(90deg, #9dbce0 0 1px, var(--blue) 1px 3px); }

.apps { position: absolute; left: 1526px; top: 4px; width: 190px; font-size: 9px; }
.apps header { display: grid; grid-template-columns: 117px 17px 16px 16px 16px 10px; height: 17px; align-items: center; }
.apps header, .assist header { line-height: 17px; }
.apps nav { display: grid; grid-template-columns: 39px 41px 40px 40px 20px; height: 31px; padding-left: 6px; line-height: 32px; }
.apps li { display: grid; grid-template-columns: 18px 1fr; align-items: center; height: 16.600px; line-height: 16px; font-size: 9.100px; white-space: nowrap; }
.apps ul { margin: -5px 0 0 -1px; }

.assist { position: absolute; left: 1733px; top: 4px; width: 187px; font-size: 9px; }
.assist header { display: grid; grid-template-columns: 153px 16px 8px; align-items: center; height: 17px; }
.time { display: grid; grid-template-columns: 146px 24px; height: 45px; padding-left: 8px; }
.time strong { font-size: 31px; font-weight: 300; line-height: 48px; color: var(--paper); letter-spacing: -.1px; white-space: nowrap; }
.time svg { margin-top: 7px; }
.date { display: grid; grid-template-columns: 49px 41px 80px; padding-left: 8px; height: 17px; line-height: 17px; color: #8ab4e4; font-size: 8.900px; }
.tools { display: grid; grid-template-columns: repeat(4, 42px); grid-auto-rows: 37px; padding: 15px 0 0 4px; font-size: 8.700px; color: var(--blue); }
.tools span { display: grid; grid-template-rows: 14px 20px; justify-items: center; align-items: center; line-height: 20px; }
.todo { display: grid; grid-template-columns: 12px 136px 17px 13px; align-items: center; height: 22px; padding-left: 3px; margin-top: 11px; line-height: 22px; color: var(--blue); }
.find { display: grid; grid-template-columns: 12px 100px; align-items: center; padding-left: 4px; height: 26px; line-height: 26px; font-size: 8.900px; }

.chat { left: 1660px; top: 229px; width: 260px; height: 370px; background: var(--paper); color: var(--ink); border-bottom: 1px solid var(--blue); overflow: hidden; }
.chat header { display: grid; grid-template-columns: 16px 76px 22px 23px 6px; align-items: center; padding-left: 118px; height: 22px; font-size: 9px; line-height: 22px; }
.chat dl { font-size: 10.300px; padding-top: 3px; }
.chat dt, .chat dd { height: 18.650px; line-height: 18px; padding-left: 7px; white-space: nowrap; }
.chat dt { color: var(--blue); }
.sendto { display: flex; align-items: center; height: 22px; margin-top: 20px; padding-left: 8px; font-size: 9.500px; color: var(--blue); line-height: 22px; }
.sendto b { width: 45px; color: var(--ink); font-weight: 400; }
.sendto span { width: 32px; }
.sendto .push { margin-left: 111px; }
.sendto svg + svg { margin-right: 5px; }
.chat footer { display: flex; align-items: center; gap: 12px; margin-top: 61px; padding-left: 212px; font-size: 9.700px; line-height: 18px; color: var(--blue); }
.chat footer i { width: 2px; height: 2px; background: var(--blue); flex: none; }

.dialog { left: 251px; top: 213px; width: 1329px; height: 798px; background: var(--ink); font-size: 13.600px; line-height: 24px; }
.dialog > header { display: grid; grid-template-columns: 1298px 12px; align-items: center; padding-left: 8px; height: 32px; }
.path { display: grid; grid-template-columns: 40px 36px 31px 42px 25px 17px 52px 17px 64px 16px 49px 16px 101px 16px 39px 430px 40px 79px 163px 12px; align-items: center; height: 64px; padding-left: 16px; font-size: 13.800px; }
.path .low { margin-top: 4px; }
.toolbar { display: grid; grid-template-columns: 33px 43px 1098px 30px 32px 41px 17px; align-items: center; height: 36px; padding-left: 19px; }
.body { display: grid; grid-template-columns: 164px 2px 1fr 2px; height: 578px; padding-right: 6px; overflow: hidden; }
.bar { background: var(--blue); }
.bar.left { margin-top: 108px; height: 431px; }
.bar.right { margin-top: 20px; height: 333px; }
.tree { padding-top: 3px; }
.tree li { display: grid; align-items: center; height: 36px; }
.tree .sub { grid-template-columns: 18px 18px 80px 12px; padding-left: 23px; }
.tree .sub > :nth-child(2) { justify-self: center; }
.tree .sub span { padding-left: 6px; }
.tree .pin { margin-left: 2px; }
.tree .top { grid-template-columns: 18px 18px 106px; padding-left: 14px; }
.tree .top > :nth-child(2) { justify-self: center; }
.tree .top span { padding-left: 6px; overflow: hidden; }
.tree .cloud { height: 52px; }
.tree .pc { height: 38px; }
.tree .pc > :first-child { margin-left: -4px; }
.tree .dim { opacity: .5; }
.files { overflow: hidden; }
.row { display: grid; grid-template-columns: 22px 270px 163px 134px 1fr; align-items: center; height: 34.900px; padding-left: 33px; font-size: 14.050px; }
.row svg { margin-bottom: 2px; }
.row span:nth-child(3) { padding-left: .6px; }
.row span:nth-child(4) { font-size: 13.200px; }
.head { height: 35.600px; font-size: 13.600px; line-height: 28px; padding-bottom: 3px; }
.head .nm { display: flex; margin-left: -9px; gap: 104px; }
.head .sort { margin-top: 3px; }
.dialog > footer { position: relative; height: 84px; padding-top: 9px; margin-top: 3px; }
.grain { position: absolute; left: 0; top: 0; shape-rendering: crispEdges; }
.grip { position: absolute; right: 0; bottom: 0; }
.namerow { display: grid; grid-template-columns: 69px 1096px; padding-left: 146px; align-items: center; height: 30px; position: relative; }
.namerow label { padding-bottom: 1px; }
.field { height: 30px; border: 2px solid var(--blue); border-left-width: 1px; display: flex; align-items: center; justify-content: flex-end; padding-right: 4px; }
.btns { display: grid; grid-template-columns: 97px 96px; gap: 16px; padding: 6px 0 0 1101px; height: 34px; position: relative; }
button { height: 27px; border: 1px solid var(--blue); background: var(--ink); color: var(--soft); font: inherit; line-height: 22px; }
button.primary { height: 28px; border-width: 2px; border-radius: 4px; }

.ptr, .mark { position: absolute; }
.ptr.a { left: 1375px; top: 237px; }
.ptr.b { left: 0; top: 893px; }
.mark { left: 10px; top: 959px; }

.taskbar { position: absolute; left: 0; bottom: 0; width: 1920px; height: 54px; display: grid; grid-template-columns: 647px 584px; padding-left: 689px; }
.pinned { display: grid; grid-template-columns: repeat(11, 49.500px); height: 49px; }
.pinned span { display: grid; grid-template-rows: 46px 3px; justify-items: center; align-items: center; padding-right: 1px; }
.pinned svg { margin-top: 9px; }
.run::after { content: ""; width: 6px; height: 3px; background: var(--blue); }
.run.wide::after { width: 18px; }
.tray { display: grid; grid-template-columns: 26px 26px 28px 27px 27px 27px 80px 30px 23px 32px 31px 39px 31px 27px 81px 38px; justify-items: center; align-items: center; }
.tray b { font-size: 14px; font-weight: 400; color: #7cabe0; line-height: 20px; }
.tray time { justify-self: end; text-align: right; font-size: 13.200px; line-height: 17px; color: #c6dbf3; white-space: nowrap; }
```
